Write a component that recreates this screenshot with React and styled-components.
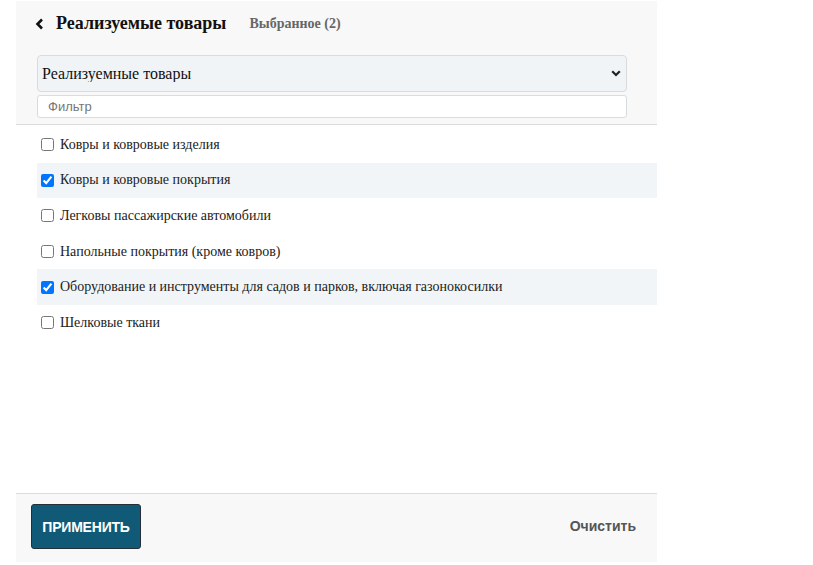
import styled, { createGlobalStyle } from 'styled-components';

const GlobalStyle = createGlobalStyle`
  body {
    margin: 0;
    background: #fff;
    font-family: 'Liberation Serif', 'Times New Roman', serif;
  }
`;

const Panel = styled.div`
  width: 641px;
  height: 561px;
  margin: 1px 0 0 16px;
  display: flex;
  flex-direction: column;
`;

const Header = styled.div`
  background: #f8f8f8;
  border-bottom: 1px solid #dcdcdc;
  padding: 0 30px 6px 21px;
  height: 117px;
  display: flex;
  flex-direction: column;
`;

const TitleRow = styled.div`
  display: flex;
  align-items: center;
  height: 44px;
  margin-left: -2px;
`;

const BackIcon = styled.svg`
  width: 9px;
  height: 12px;
  margin-right: 12px;
  margin-top: 1px;
`;

const Title = styled.h2`
  margin: 0;
  font-size: 18px;
  font-weight: bold;
  color: #111;
`;

const Selected = styled.span`
  margin-left: 23px;
  margin-top: 2px;
  font-size: 14px;
  font-weight: bold;
  color: #666;
`;

const SelectWrap = styled.div`
  position: relative;
  margin-top: 10px;
  width: 590px;
`;

const Select = styled.select`
  appearance: none;
  width: 100%;
  height: 37px;
  padding: 0 4px;
  background: #f0f4f7;
  border: 1px solid #d8dcdf;
  border-radius: 4px;
  font-family: 'Liberation Serif', 'Times New Roman', serif;
  font-size: 16px;
  color: #111;
  outline: none;
`;

const Chevron = styled.svg`
  position: absolute;
  right: 6px;
  top: 15px;
  width: 10px;
  height: 7px;
  pointer-events: none;
`;

const FilterInput = styled.input`
  margin-top: 3px;
  width: 590px;
  height: 23px;
  box-sizing: border-box;
  padding: 0 10px;
  border: 1px solid #d8dcdf;
  border-radius: 3px;
  background: #fff;
  font-family: 'Liberation Sans', Arial, sans-serif;
  font-size: 13px;
  outline: none;

  &::placeholder {
    color: #777;
  }
`;

const List = styled.div`
  flex: 1;
  padding: 2px 0 0 21px;
`;

const Row = styled.label`
  display: flex;
  align-items: center;
  height: 35.6px;
  padding-left: 4px;
  background: ${(props) => (props.checked ? '#f1f5f7' : 'transparent')};
  font-size: 14px;
  color: #222;
  cursor: pointer;
`;

const Check = styled.input`
  margin: 0 6px 0 0;
  width: 13px;
  height: 13px;
  accent-color: #0075ff;
`;

const Footer = styled.div`
  background: #f8f8f8;
  border-top: 1px solid #dcdcdc;
  height: 69px;
  box-sizing: border-box;
  display: flex;
  align-items: flex-start;
  justify-content: space-between;
  padding: 10px 21px 0 15px;
`;

const ApplyButton = styled.button`
  width: 110px;
  height: 45px;
  background: #105a77;
  border: 1px solid #243038;
  border-radius: 3px;
  color: #fff;
  font-family: 'Liberation Sans', Arial, sans-serif;
  font-size: 14px;
  font-weight: bold;
  letter-spacing: -0.2px;
  cursor: pointer;
`;

const ClearButton = styled.button`
  background: none;
  border: none;
  padding: 0;
  margin-top: 14px;
  color: #555;
  font-family: 'Liberation Sans', Arial, sans-serif;
  font-size: 14px;
  font-weight: bold;
  cursor: pointer;
`;

const items = [
  { name: 'Ковры и ковровые изделия', checked: false },
  { name: 'Ковры и ковровые покрытия', checked: true },
  { name: 'Легковы пассажирские автомобили', checked: false },
  { name: 'Напольные покрытия (кроме ковров)', checked: false },
  {
    name: 'Оборудование и инструменты для садов и парков, включая газонокосилки',
    checked: true,
  },
  { name: 'Шелковые ткани', checked: false },
];

export default function App() {
  return (
    <>
      <GlobalStyle />
      <Panel>
        <Header>
          <TitleRow>
            <BackIcon viewBox="0 0 9 12">
              <path d="M7 1.5 L2.5 6 L7 10.5" fill="none" stroke="#111" strokeWidth="2.6" />
            </BackIcon>
            <Title>Реализуемые товары</Title>
            <Selected>Выбранное (2)</Selected>
          </TitleRow>
          <SelectWrap>
            <Select defaultValue="sold">
              <option value="sold">Реализуемные товары</option>
            </Select>
            <Chevron viewBox="0 0 10 7">
              <path d="M1.2 1.2 L5 5 L8.8 1.2" fill="none" stroke="#222" strokeWidth="2.2" />
            </Chevron>
          </SelectWrap>
          <FilterInput placeholder="Фильтр" />
        </Header>
        <List>
          {items.map((item) => (
            <Row key={item.name} checked={item.checked}>
              <Check type="checkbox" defaultChecked={item.checked} />
              {item.name}
            </Row>
          ))}
        </List>
        <Footer>
          <ApplyButton>ПРИМЕНИТЬ</ApplyButton>
          <ClearButton>Очистить</ClearButton>
        </Footer>
      </Panel>
    </>
  );
}
